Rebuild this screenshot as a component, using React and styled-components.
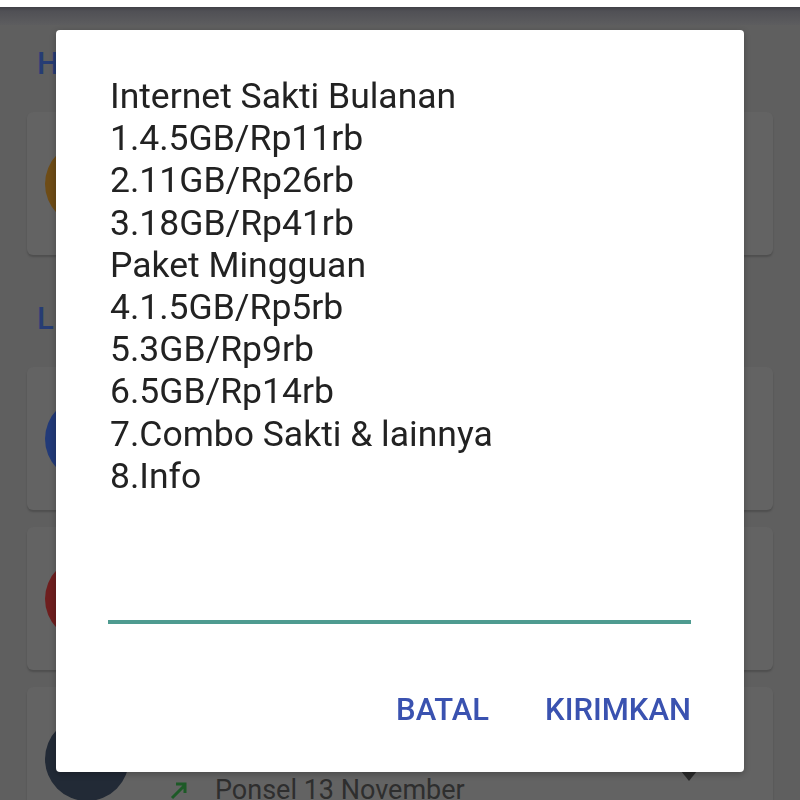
import React from "react";
import styled, { createGlobalStyle } from "styled-components";

const Global = createGlobalStyle`
  html, body { margin: 0; padding: 0; }
  body {
    width: 800px;
    height: 800px;
    overflow: hidden;
    background: #5f5f5f;
    font-family: Roboto, "Noto Sans", Arial, sans-serif;
  }
`;

const Page = styled.div`
  width: 800px;
  height: 800px;
  overflow: hidden;
  background: #5f5f5f;
  display: flex;
  flex-direction: column;
`;

const StatusStrip = styled.div`
  height: 7px;
  background: #ffffff;
  flex: none;
`;

const Shade = styled.div`
  height: 18px;
  flex: none;
  background: linear-gradient(#404046 0px, #505055 4px, #5d5d5f 18px);
`;

const Content = styled.div`
  padding: 19px 27px 0 27px;
  display: flex;
  flex-direction: column;
`;

const Heading = styled.div`
  font-size: 31px;
  line-height: 40px;
  font-weight: 500;
  color: #263c74;
  padding-left: 10px;
  margin-top: ${(p) => (p.$first ? "0" : "44px")};
  margin-bottom: 28px;
`;

const Card = styled.div`
  height: 143px;
  flex: none;
  border-radius: 6px;
  background: #636363;
  box-shadow: 0 2px 2px rgba(0, 0, 0, 0.18);
  display: flex;
  align-items: center;
  padding-left: 18px;
  gap: 40px;
  margin-bottom: ${(p) => (p.$gap ? "17px" : "0")};
  position: relative;
`;

const Avatar = styled.div`
  width: 84px;
  height: 84px;
  border-radius: 50%;
  background: ${(p) => p.$color};
  flex: none;
`;

const Info = styled.div`
  display: flex;
  flex-direction: column;
  align-self: flex-start;
  padding-top: 88px;
`;

const SubRow = styled.div`
  display: flex;
  align-items: center;
  gap: 26px;
  font-size: 27px;
  line-height: 30px;
  color: #2e2e2e;
`;

const Caret = styled.div`
  position: absolute;
  right: 76px;
  top: 84px;
  width: 0;
  height: 0;
  border-left: 8px solid transparent;
  border-right: 8px solid transparent;
  border-top: 10px solid #2a2a2a;
`;

const Dialog = styled.div`
  position: fixed;
  left: 56px;
  top: 30px;
  width: 688px;
  height: 742px;
  border-radius: 4px;
  background: #ffffff;
  box-shadow: 0 2px 6px rgba(0, 0, 0, 0.25);
  box-sizing: border-box;
  padding: 45px 53px 0 54px;
  display: flex;
  flex-direction: column;
`;

const Message = styled.div`
  font-size: 35.5px;
  line-height: 42.2px;
  color: #222222;
  white-space: pre-line;
`;

const Field = styled.div`
  margin-top: 83px;
  margin-left: -2px;
  height: 40px;
  border-bottom: 4px solid #4e9b90;
`;

const Actions = styled.div`
  margin-top: 68px;
  display: flex;
  justify-content: flex-end;
  gap: 56px;
`;

const ActionButton = styled.div`
  font-size: 31px;
  line-height: 36px;
  font-weight: 500;
  color: #3a52b0;
`;

const message = `Internet Sakti Bulanan
1.4.5GB/Rp11rb
2.11GB/Rp26rb
3.18GB/Rp41rb
Paket Mingguan
4.1.5GB/Rp5rb
5.3GB/Rp9rb
6.5GB/Rp14rb
7.Combo Sakti & lainnya
8.Info`;

export default function App() {
  return (
    <>
      <Global />
      <Page>
        <StatusStrip />
        <Shade />
        <Content>
          <Heading $first>H</Heading>
          <Card>
            <Avatar $color="#6e4c16" />
          </Card>
          <Heading>L</Heading>
          <Card $gap>
            <Avatar $color="#223a78" />
          </Card>
          <Card $gap>
            <Avatar $color="#6e1e1e" />
          </Card>
          <Card>
            <Avatar $color="#222a36" />
            <Info>
              <SubRow>
                <svg width="20" height="20" viewBox="0 0 20 20">
                  <path d="M3 18 L16 5 M7 4 H16 V13" stroke="#1d5a27" strokeWidth="3" fill="none" />
                </svg>
                <span>Ponsel 13 November</span>
              </SubRow>
            </Info>
            <Caret />
          </Card>
        </Content>
      </Page>
      <Dialog>
        <Message>{message}</Message>
        <Field />
        <Actions>
          <ActionButton>BATAL</ActionButton>
          <ActionButton>KIRIMKAN</ActionButton>
        </Actions>
      </Dialog>
    </>
  );
}
